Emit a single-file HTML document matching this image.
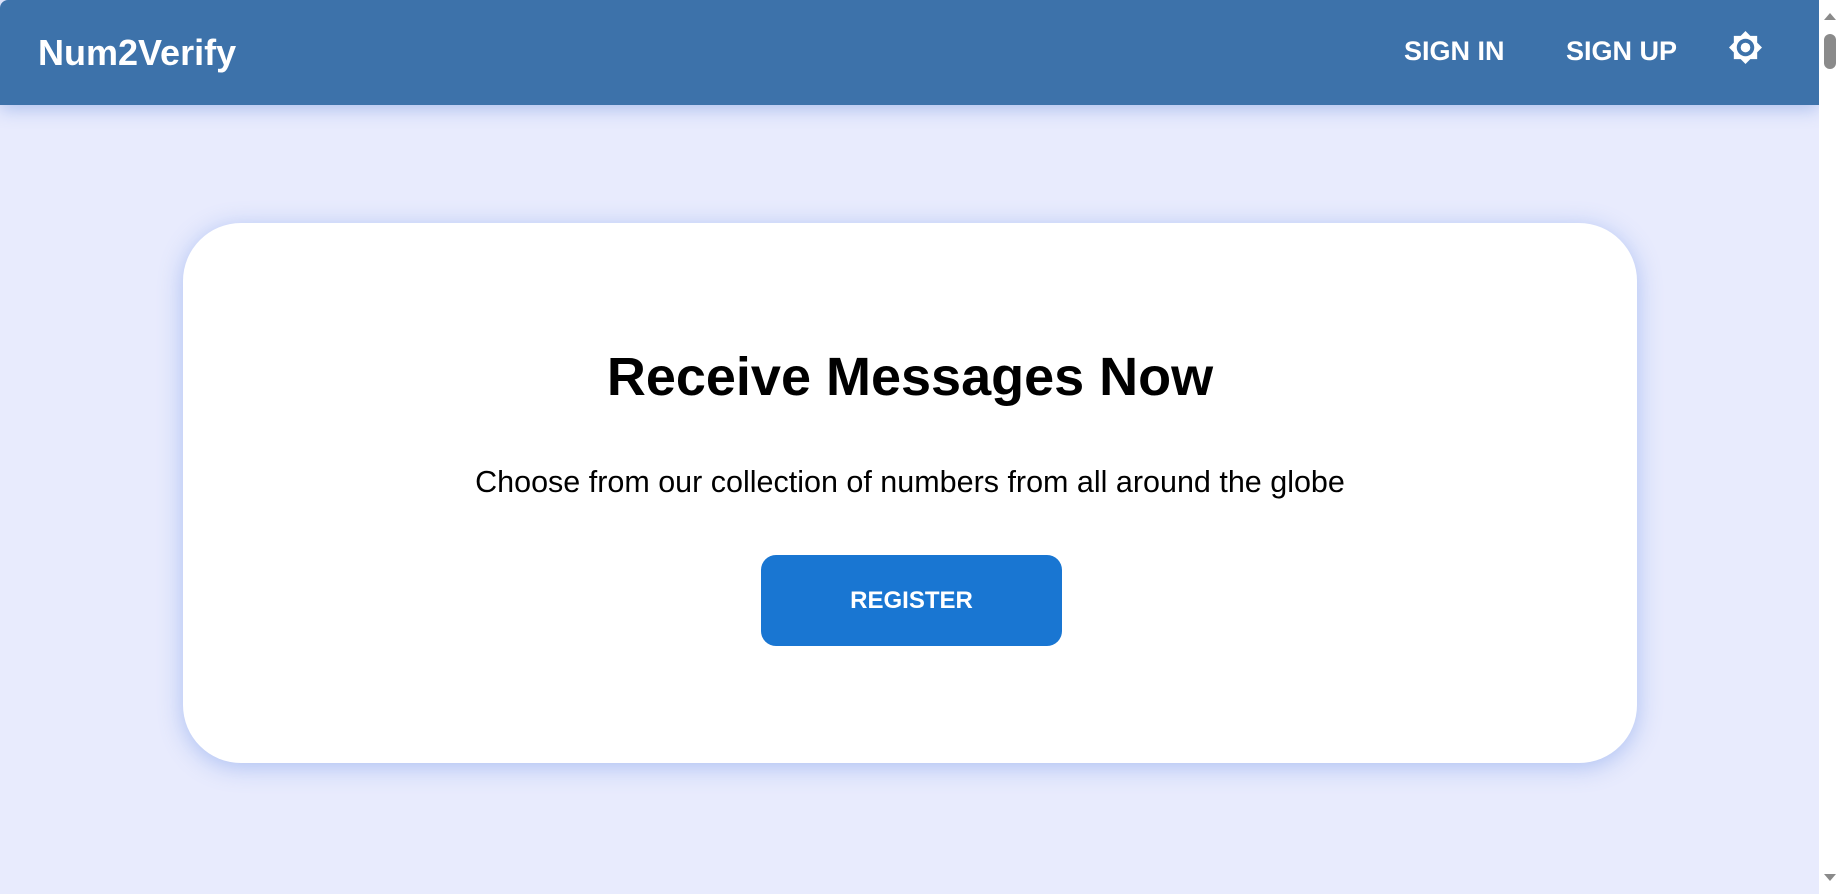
<!DOCTYPE html>
<html><head><meta charset="utf-8"><style>
html,body{margin:0;padding:0;width:1841px;height:894px;overflow:hidden;font-family:"Liberation Sans",Arial,sans-serif;}
body{background:#e8ebfd;position:relative;}
.hdr{position:absolute;left:0;top:0;width:1819px;height:105px;background:#3d72aa;box-shadow:0 4px 18px rgba(100,140,220,.45);border-top-left-radius:8px;}
.logo{position:absolute;left:38px;top:32px;font-size:36px;font-weight:bold;color:#fff;}
.nav{position:absolute;top:36px;font-size:27px;font-weight:bold;color:#fff;}
.sb{position:absolute;right:0;top:0;width:22px;height:894px;background:#fff;}
.card{position:absolute;left:183px;top:223px;width:1454px;height:540px;background:#fff;border-radius:58px;box-shadow:0 4px 24px rgba(100,140,230,.45);text-align:center;}
.t{position:absolute;left:0;right:0;top:123px;font-size:54px;font-weight:bold;color:#000;}
.s{position:absolute;left:0;right:0;top:242px;font-size:30.5px;color:#000;}
.btn{position:absolute;left:578px;top:332px;width:301px;height:91px;background:#1976d2;border-radius:15px;color:#fff;font-weight:bold;font-size:24px;line-height:91px;}
</style></head><body>
<div class="hdr">
<div class="logo">Num2Verify</div>
<div class="nav" style="left:1404px">SIGN IN</div>
<div class="nav" style="left:1566px">SIGN UP</div>
<svg style="position:absolute;left:1728px;top:30px" width="35" height="35" viewBox="0 0 24 24"><path fill="#fff" d="M20 8.69V4h-4.69L12 .69 8.69 4H4v4.69L.69 12 4 15.31V20h4.69L12 23.310 15.31 20H20v-4.69L23.31 12 20 8.69zM12 18c-3.31 0-6-2.690-6-6s2.69-6 6-6 6 2.69 6 6-2.69 6-6 6z"/><circle cx="12" cy="12" r="3.3" fill="#fff"/></svg>
</div>
<div class="sb">
<svg width="22" height="894" style="position:absolute;left:0;top:0"><path d="M5 20 L11 13 L17 20Z" fill="#8a8a8a"/><rect x="5" y="34" width="12" height="35" rx="6" fill="#8a8a8a"/><path d="M5 874 L11 881 L17 874Z" fill="#8a8a8a"/></svg>
</div>
<div class="card">
<div class="t">Receive Messages Now</div>
<div class="s">Choose from our collection of numbers from all around the globe</div>
<div class="btn">REGISTER</div>
</div>
</body></html>
